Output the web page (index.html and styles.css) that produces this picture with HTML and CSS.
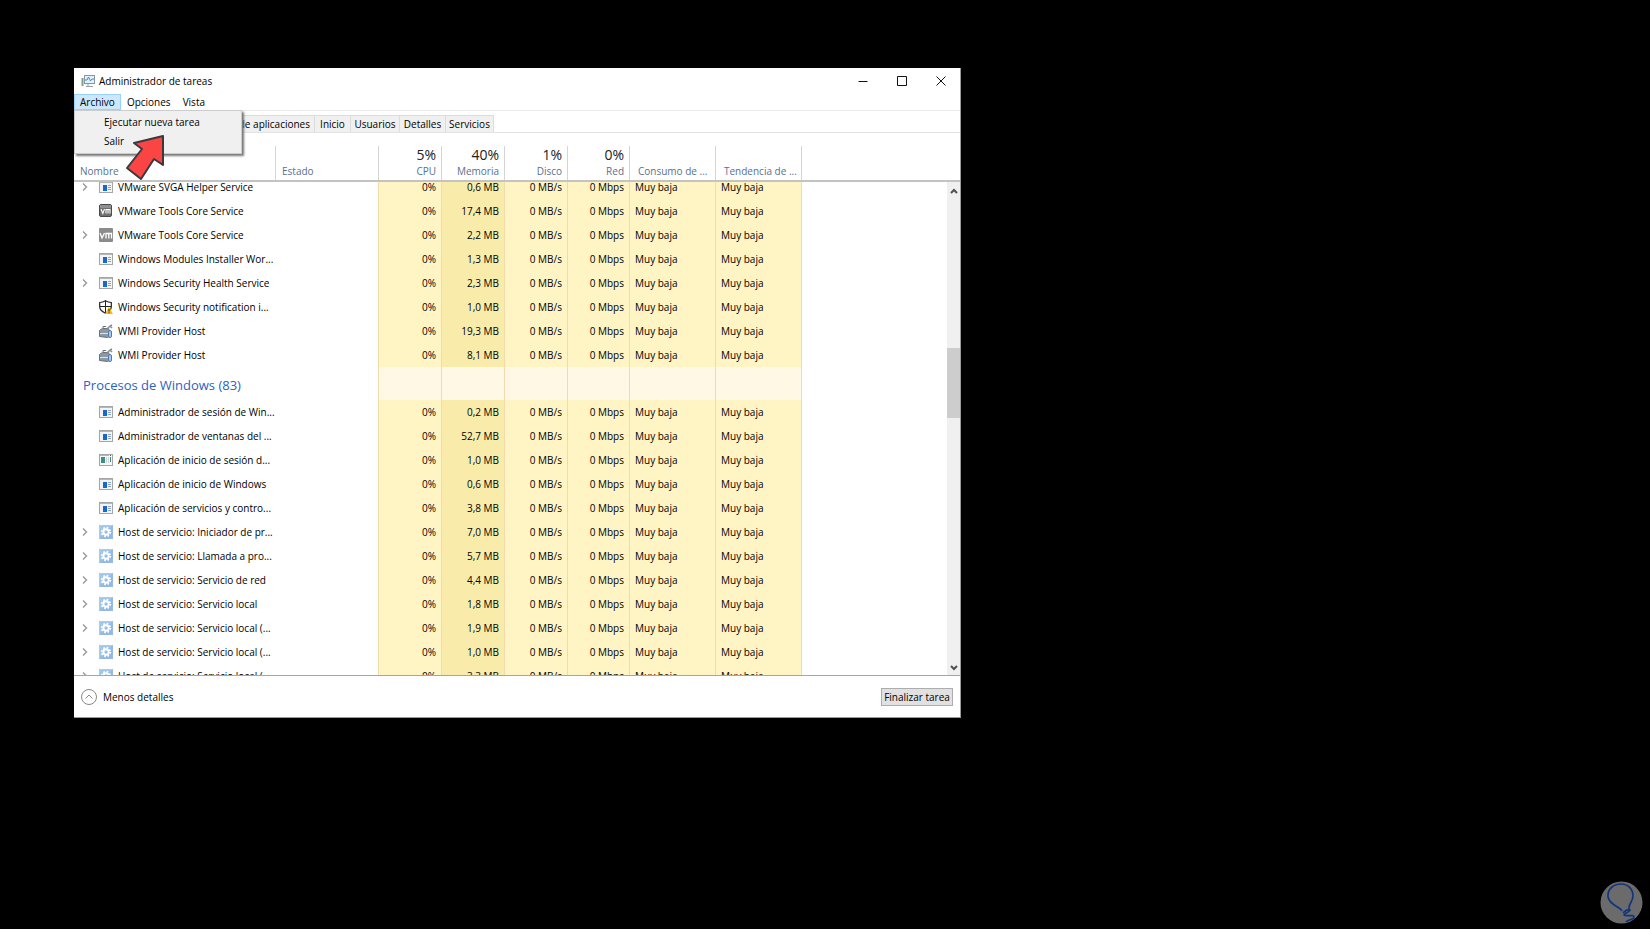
FILE: index.html
```
<!DOCTYPE html>
<html lang="es">
<head>
    <meta charset="UTF-8">
    <meta name="viewport" content="width=device-width, initial-scale=1.0">
    <title>Administrador de tareas</title>
    <link rel="stylesheet" href="styles.css">
</head>
<body>
    <!-- icons used by the process list -->
    <svg class="sprites" aria-hidden="true">
        <symbol id="app" viewBox="0 0 14 14">
            <rect x="0.5" y="1.5" width="13" height="11" fill="#f4f4f4" stroke="#a3a6a8"/>
            <path d="M1 2.5h12" stroke="#b4b7b9"/>
            <rect x="4" y="5" width="4" height="6" fill="#1767d2"/>
            <path d="M9 5.500h3M9 7.500h3M9 9.500h3" stroke="#8ea5bd"/>
        </symbol>
        <symbol id="login" viewBox="0 0 14 14">
            <rect x="0.5" y="1.500" width="13" height="11" fill="#f7f7f7" stroke="#a3a6a8"/>
            <path d="M1 2.500h9" stroke="#b4b7b9"/>
            <path d="M11 2.500h1" stroke="#555"/>
            <rect x="2" y="4" width="4" height="6" fill="#3d8f80"/>
            <path d="M7.500 4v6M9.500 4v6" stroke="#cfd3d5"/>
            <path d="M11.500 4v5" stroke="#3d8f80"/>
        </symbol>
        <symbol id="vm" viewBox="0 0 14 14">
            <rect x="0.5" y="0.5" width="12" height="12" rx="1.500" fill="#6f6f6f" stroke="#4b4b4b"/>
            <path d="M1 1h11v3H1z" fill="#8f8f8f"/>
            <path d="M2 5l1.800 4.500L5.500 5M7 9.500V5.500h4v4M9 5.500v4" fill="none" stroke="#fff" stroke-width="1.100"/>
        </symbol>
        <symbol id="vmLight" viewBox="0 0 14 14">
            <rect width="14" height="14" rx="1" fill="#8b8b8b"/>
            <path d="M1 5l2 5 2.500-5M7 10.500V5.500h5.500v5M9.800 5.500v5" fill="none" stroke="#fff" stroke-width="1.300"/>
        </symbol>
        <symbol id="shield" viewBox="0 0 14 14">
            <path d="M6.500 0.800C4.500 2 2.500 2.500 0.700 2.500v4.300c0 3 2.500 5 5.800 6.400 3.300-1.400 5.800-3.400 5.800-6.400V2.500C10.500 2.500 8.500 2 6.500 0.800z" fill="#fff" stroke="#222" stroke-width="1.200"/>
            <path d="M6.500 1v12M1 6.500h11" stroke="#222"/>
            <path d="M10 6.500l4 7.500H6z" fill="#fdb913"/>
            <path d="M10 9v2.500M10 12.300v1" stroke="#222"/>
        </symbol>
        <symbol id="wmi" viewBox="0 0 14 14">
            <path d="M0.500 6.500l3-2h6l1 2v6l-2 1-8-1z" fill="#8d9aa3" stroke="#66717a"/>
            <path d="M1 9.500h8" stroke="#dce3e8"/>
            <path d="M4 4V2.500h3" fill="none" stroke="#66717a"/>
            <path d="M7 6l4-4 2-1M11 2l2 2" fill="none" stroke="#858c91" stroke-width="1.500"/>
            <rect x="9.500" y="6.500" width="3" height="7" rx="1.500" fill="#a8c8f2" stroke="#5178b0"/>
        </symbol>
        <symbol id="gear" viewBox="0 0 14 14">
            <rect x="0.500" y="0.500" width="13" height="13" fill="#9fc7ea" stroke="#b4c9de"/>
            <path d="M0 14L14 0v14z" fill="#86b1e4" opacity="0.600"/>
            <circle cx="7" cy="7" r="4.300" fill="none" stroke="#fff" stroke-width="1.800" stroke-dasharray="1.700 1.677"/>
            <circle cx="7" cy="7" r="2.700" fill="none" stroke="#fff" stroke-width="2"/>
        </symbol>
        <symbol id="chevron" viewBox="0 0 6 8">
            <path d="M1 0.500L4.500 4 1 7.500" fill="none" stroke="#999" stroke-width="1.400"/>
        </symbol>
    </svg>

    <main class="window">
        <header class="titleBar">
            <svg class="appIcon" viewBox="0 0 14 12" aria-hidden="true">
                <path d="M1.500 3v8" stroke="#8b9a8f" stroke-width="2"/>
                <path d="M1 5h1" stroke="#3fae57"/>
                <rect x="3.500" y="0.500" width="10" height="8" fill="#e4f1fa" stroke="#8796a3"/>
                <path d="M4 5h2l1.500-3 2 4 1.500-2h2" fill="none" stroke="#3f8fc9"/>
                <path d="M7 9v2M5 11.500h7" stroke="#98a2aa"/>
            </svg>
            <h1>Administrador de tareas</h1>
            <div class="controls">
                <button aria-label="Minimizar"><svg viewBox="0 0 10 10"><path d="M0.500 5.500h9"/></svg></button>
                <button aria-label="Maximizar"><svg viewBox="0 0 10 10"><path d="M0.500 0.500h9v9h-9z"/></svg></button>
                <button aria-label="Cerrar"><svg viewBox="0 0 10 10"><path d="M0.500 0.500l9 9M9.500 0.500l-9 9"/></svg></button>
            </div>
        </header>

        <nav class="menuBar">
            <button class="open">Archivo</button>
            <button>Opciones</button>
            <button>Vista</button>
            <div class="dropdown">
                <button>Ejecutar nueva tarea</button>
                <button>Salir</button>
            </div>
            <svg class="arrow" viewBox="0 0 40 46" aria-hidden="true">
                <path d="M37 2L8 9l8 6L1 34l14 11 13-20 9 6z"/>
            </svg>
        </nav>

        <div class="tabs" role="tablist">
            <button role="tab" class="active">Procesos</button>
            <button role="tab">Rendimiento</button>
            <button role="tab" class="history">Historial de aplicaciones</button>
            <button role="tab">Inicio</button>
            <button role="tab">Usuarios</button>
            <button role="tab">Detalles</button>
            <button role="tab">Servicios</button>
        </div>

        <table class="grid head">
            <colgroup>
                <col class="cName"><col class="cState"><col class="cNum"><col class="cNum"><col class="cNum"><col class="cNet"><col class="cText"><col class="cText"><col>
            </colgroup>
            <thead>
                <tr>
                    <th>Nombre</th>
                    <th>Estado</th>
                    <th class="num"><strong>5%</strong>CPU</th>
                    <th class="num"><strong>40%</strong>Memoria</th>
                    <th class="num"><strong>1%</strong>Disco</th>
                    <th class="num"><strong>0%</strong>Red</th>
                    <th class="power">Consumo de ...</th>
                    <th class="power">Tendencia de ...</th>
                    <td></td>
                </tr>
            </thead>
        </table>

        <section class="list">
            <div class="rows">
                <table class="grid body">
                    <colgroup>
                        <col class="cName"><col class="cState"><col class="cNum"><col class="cNum"><col class="cNum"><col class="cNet"><col class="cText"><col class="cText"><col>
                    </colgroup>
                    <tbody id="processes"></tbody>
                </table>
            </div>
            <div class="scrollbar">
                <button aria-label="Subir"><svg viewBox="0 0 8 6"><path d="M1 5l3-3 3 3"/></svg></button>
                <div class="track"><div class="thumb"></div></div>
                <button aria-label="Bajar"><svg viewBox="0 0 8 6"><path d="M1 1l3 3 3-3"/></svg></button>
            </div>
        </section>

        <footer class="footer">
            <button class="less">
                <svg viewBox="0 0 16 16" aria-hidden="true"><circle cx="8" cy="8" r="7.500"/><path d="M4.500 9.500L8 6l3.500 3.500"/></svg>
                Menos detalles
            </button>
            <button class="endTask">Finalizar tarea</button>
        </footer>
    </main>

    <svg class="watermark" viewBox="0 0 43 43" aria-hidden="true">
        <circle cx="21.500" cy="21.500" r="21" fill="#6b6b6b"/>
        <path d="M22 30C20 25 10 25 8 16 7 8 14 3 21 3c7 0 12 5 12 12 0 6-5 8-4 13 M23 32c2-2 5-4 7-3-1 3-6 3-6 5 2 2 10-1 10 2 0 3-6 2-8 5" fill="none" stroke="#12357a" stroke-width="1.700"/>
    </svg>

    <script>
        // [icon, name, memory, has children]
        let background = [
            ["app", "VMware SVGA Helper Service", "0,6 MB", true],
            ["vm", "VMware Tools Core Service", "17,4 MB", false],
            ["vmLight", "VMware Tools Core Service", "2,2 MB", true],
            ["app", "Windows Modules Installer Wor...", "1,3 MB", false],
            ["app", "Windows Security Health Service", "2,3 MB", true],
            ["shield", "Windows Security notification i...", "1,0 MB", false],
            ["wmi", "WMI Provider Host", "19,3 MB", false],
            ["wmi", "WMI Provider Host", "8,1 MB", false]
        ];
        let system = [
            ["app", "Administrador de sesión de Win...", "0,2 MB", false],
            ["app", "Administrador de ventanas del ...", "52,7 MB", false],
            ["login", "Aplicación de inicio de sesión d...", "1,0 MB", false],
            ["app", "Aplicación de inicio de Windows", "0,6 MB", false],
            ["app", "Aplicación de servicios y contro...", "3,8 MB", false],
            ["gear", "Host de servicio: Iniciador de pr...", "7,0 MB", true],
            ["gear", "Host de servicio: Llamada a pro...", "5,7 MB", true],
            ["gear", "Host de servicio: Servicio de red", "4,4 MB", true],
            ["gear", "Host de servicio: Servicio local", "1,8 MB", true],
            ["gear", "Host de servicio: Servicio local (...", "1,9 MB", true],
            ["gear", "Host de servicio: Servicio local (...", "1,0 MB", true],
            ["gear", "Host de servicio: Servicio local (...", "3,3 MB", true]
        ];

        function row([icon, name, memory, children]) {
            let chevron = children ? `<svg class="chevron"><use href="#chevron"/></svg>` : "";
            return `<tr>
                <td><div class="name"><span class="expand">${chevron}</span><svg class="icon"><use href="#${icon}"/></svg>${name}</div></td>
                <td></td>
                <td class="num">0%</td>
                <td class="num memory">${memory}</td>
                <td class="num">0 MB/s</td>
                <td class="num">0 Mbps</td>
                <td class="power">Muy baja</td>
                <td class="power">Muy baja</td>
                <td></td>
            </tr>`;
        }

        let group = `<tr class="group">
            <th colspan="2">Procesos de Windows (83)</th>
            <td class="num"></td><td class="num"></td><td class="num"></td><td class="num"></td>
            <td class="power"></td><td class="power"></td><td></td>
        </tr>`;

        document.querySelector("#processes").innerHTML =
            background.map(row).join("") + group + system.map(row).join("");
    </script>
</body>
</html>
```
FILE: styles.css
```
* {
    box-sizing: border-box;
}

body {
    margin: 0;
    height: 100vh;
    padding: 68px 74px 0;
    display: grid;
    grid-template-columns: 887fr 615fr;
    grid-template-rows: 650fr 211fr;
    background: #000;
    color: #000;
    font-family: "Open Sans", "Noto Sans", sans-serif;
    font-size: 10px;
    line-height: 16px;
    overflow: hidden;
}

button {
    margin: 0;
    padding: 0;
    border: 0;
    background: none;
    color: inherit;
    font: inherit;
    white-space: nowrap;
}

.sprites {
    position: absolute;
    width: 0;
    height: 0;
}

.window {
    display: flex;
    flex-direction: column;
    min-height: 0;
    background: #fff;
    border-right: 1px solid #999;
    border-bottom: 1px solid #999;
}

/* title bar */
.titleBar {
    display: flex;
    align-items: center;
    height: 26px;
    padding: 0 0 1px 7px;
}

.appIcon {
    width: 14px;
    height: 12px;
    margin-right: 4px;
}

.titleBar h1 {
    flex: 1;
    margin: 0;
    font-size: 10px;
    font-weight: normal;
}

.controls {
    display: flex;
}

.controls button {
    display: flex;
    align-items: center;
    justify-content: center;
    width: 39px;
    height: 24px;
}

.controls svg {
    width: 10px;
    height: 10px;
    fill: none;
    stroke: #111;
}

/* menu */
.menuBar {
    position: relative;
    display: flex;
    height: 17px;
    border-bottom: 1px solid #ececec;
}

.menuBar > button {
    padding: 0 6px;
}

.menuBar > .open {
    background: #cce8ff;
    box-shadow: inset 0 0 0 1px #99d1ff;
}

.dropdown {
    position: absolute;
    z-index: 1;
    top: 16px;
    left: 0;
    display: flex;
    flex-direction: column;
    width: 168px;
    padding: 1px 0 3px;
    background: #f0f0f0;
    border: 1px solid #ccc;
    box-shadow: 2px 2px 2px #777;
}

.dropdown button {
    height: 19px;
    padding-left: 29px;
    text-align: left;
}

.arrow {
    position: absolute;
    z-index: 2;
    top: 40px;
    left: 52px;
    width: 40px;
    height: 46px;
    fill: #fb4444;
    stroke: #3a3a3e;
    stroke-width: 2;
    stroke-linejoin: round;
}

/* tabs */
.tabs {
    display: grid;
    grid-template-columns: 48px 61px 132px 36px 49px 46px 48px;
    height: 22px;
    padding-top: 4px;
    border-bottom: 1px solid #e3e3e3;
}

.tabs button {
    background: #f0f0f0;
    border: 1px solid #dcdcdc;
    border-width: 1px 1px 0 0;
}

.tabs .active {
    background: #fff;
}

.tabs .history {
    padding-right: 4px;
    text-align: right;
}

/* process table */
.grid {
    width: 100%;
    table-layout: fixed;
    border-collapse: separate;
    border-spacing: 0;
}

.grid th,
.grid td {
    padding: 0;
    font-weight: normal;
    text-align: left;
    white-space: nowrap;
}

.cName {
    width: 202px;
}

.cState {
    width: 103px;
}

.cNum {
    width: 63px;
}

.cNet {
    width: 62px;
}

.cText {
    width: 86px;
}

.head {
    margin-top: 13px;
    border-bottom: 2px solid #c3c3c3;
}

.head th {
    height: 34px;
    padding: 0 6px 1px;
    border-right: 1px solid #d5d5d5;
    color: #5a708f;
    vertical-align: bottom;
}

.grid .num {
    padding-right: 5px;
    text-align: right;
}

.head strong {
    display: block;
    color: #222;
    font-size: 14px;
    font-weight: normal;
    line-height: 17px;
}

.head .power {
    padding: 0 0 1px 8px;
}

.list {
    display: flex;
    flex: 1;
    min-height: 0;
    border-bottom: 1px solid #a5a5a5;
}

.rows {
    flex: 1;
    overflow: hidden;
}

.body {
    margin-top: -7px;
}

.body td {
    height: 24px;
}

.body .num,
.body .power {
    background: #fff4c4;
    border-right: 1px solid #f0dcab;
}

.body td:nth-child(2) {
    border-right: 1px solid #f0dcab;
}

.body .memory {
    background: #f9ecaa;
}

.body .power {
    padding-left: 5px;
}

.name {
    display: flex;
    align-items: center;
}

.expand {
    flex: none;
    width: 25px;
    padding-left: 8px;
    line-height: 8px;
}

.chevron {
    width: 6px;
    height: 8px;
}

.icon {
    flex: none;
    width: 14px;
    height: 14px;
    margin-right: 5px;
}

.group td,
.group th {
    height: 33px;
}

.grid .group th {
    padding: 3px 0 0 9px;
    border-right: 1px solid #f0dcab;
    color: #2a63bd;
    font-size: 13px;
}

.body .group .num,
.body .group .power {
    background: #fff8e5;
}

/* scrollbar */
.scrollbar {
    display: flex;
    flex-direction: column;
    width: 13px;
    background: #f0f0f0;
}

.scrollbar button {
    height: 16px;
    line-height: 6px;
}

.scrollbar svg {
    width: 8px;
    height: 6px;
    fill: none;
    stroke: #505050;
    stroke-width: 2;
}

.track {
    display: grid;
    flex: 1;
    grid-template-rows: 150fr 70fr 241fr;
}

.thumb {
    grid-row: 2;
    background: #cdcdcd;
}

/* footer */
.footer {
    display: flex;
    align-items: center;
    justify-content: space-between;
    height: 41px;
    padding: 0 7px;
}

.less {
    display: flex;
    align-items: center;
    gap: 6px;
}

.less svg {
    width: 16px;
    height: 16px;
    fill: none;
    stroke: #888;
}

.endTask {
    min-width: 72px;
    height: 18px;
    background: #e1e1e1;
    border: 1px solid #adadad;
    line-height: 16px;
}

.watermark {
    position: absolute;
    right: 7px;
    bottom: 5px;
    width: 43px;
    height: 43px;
}
```
